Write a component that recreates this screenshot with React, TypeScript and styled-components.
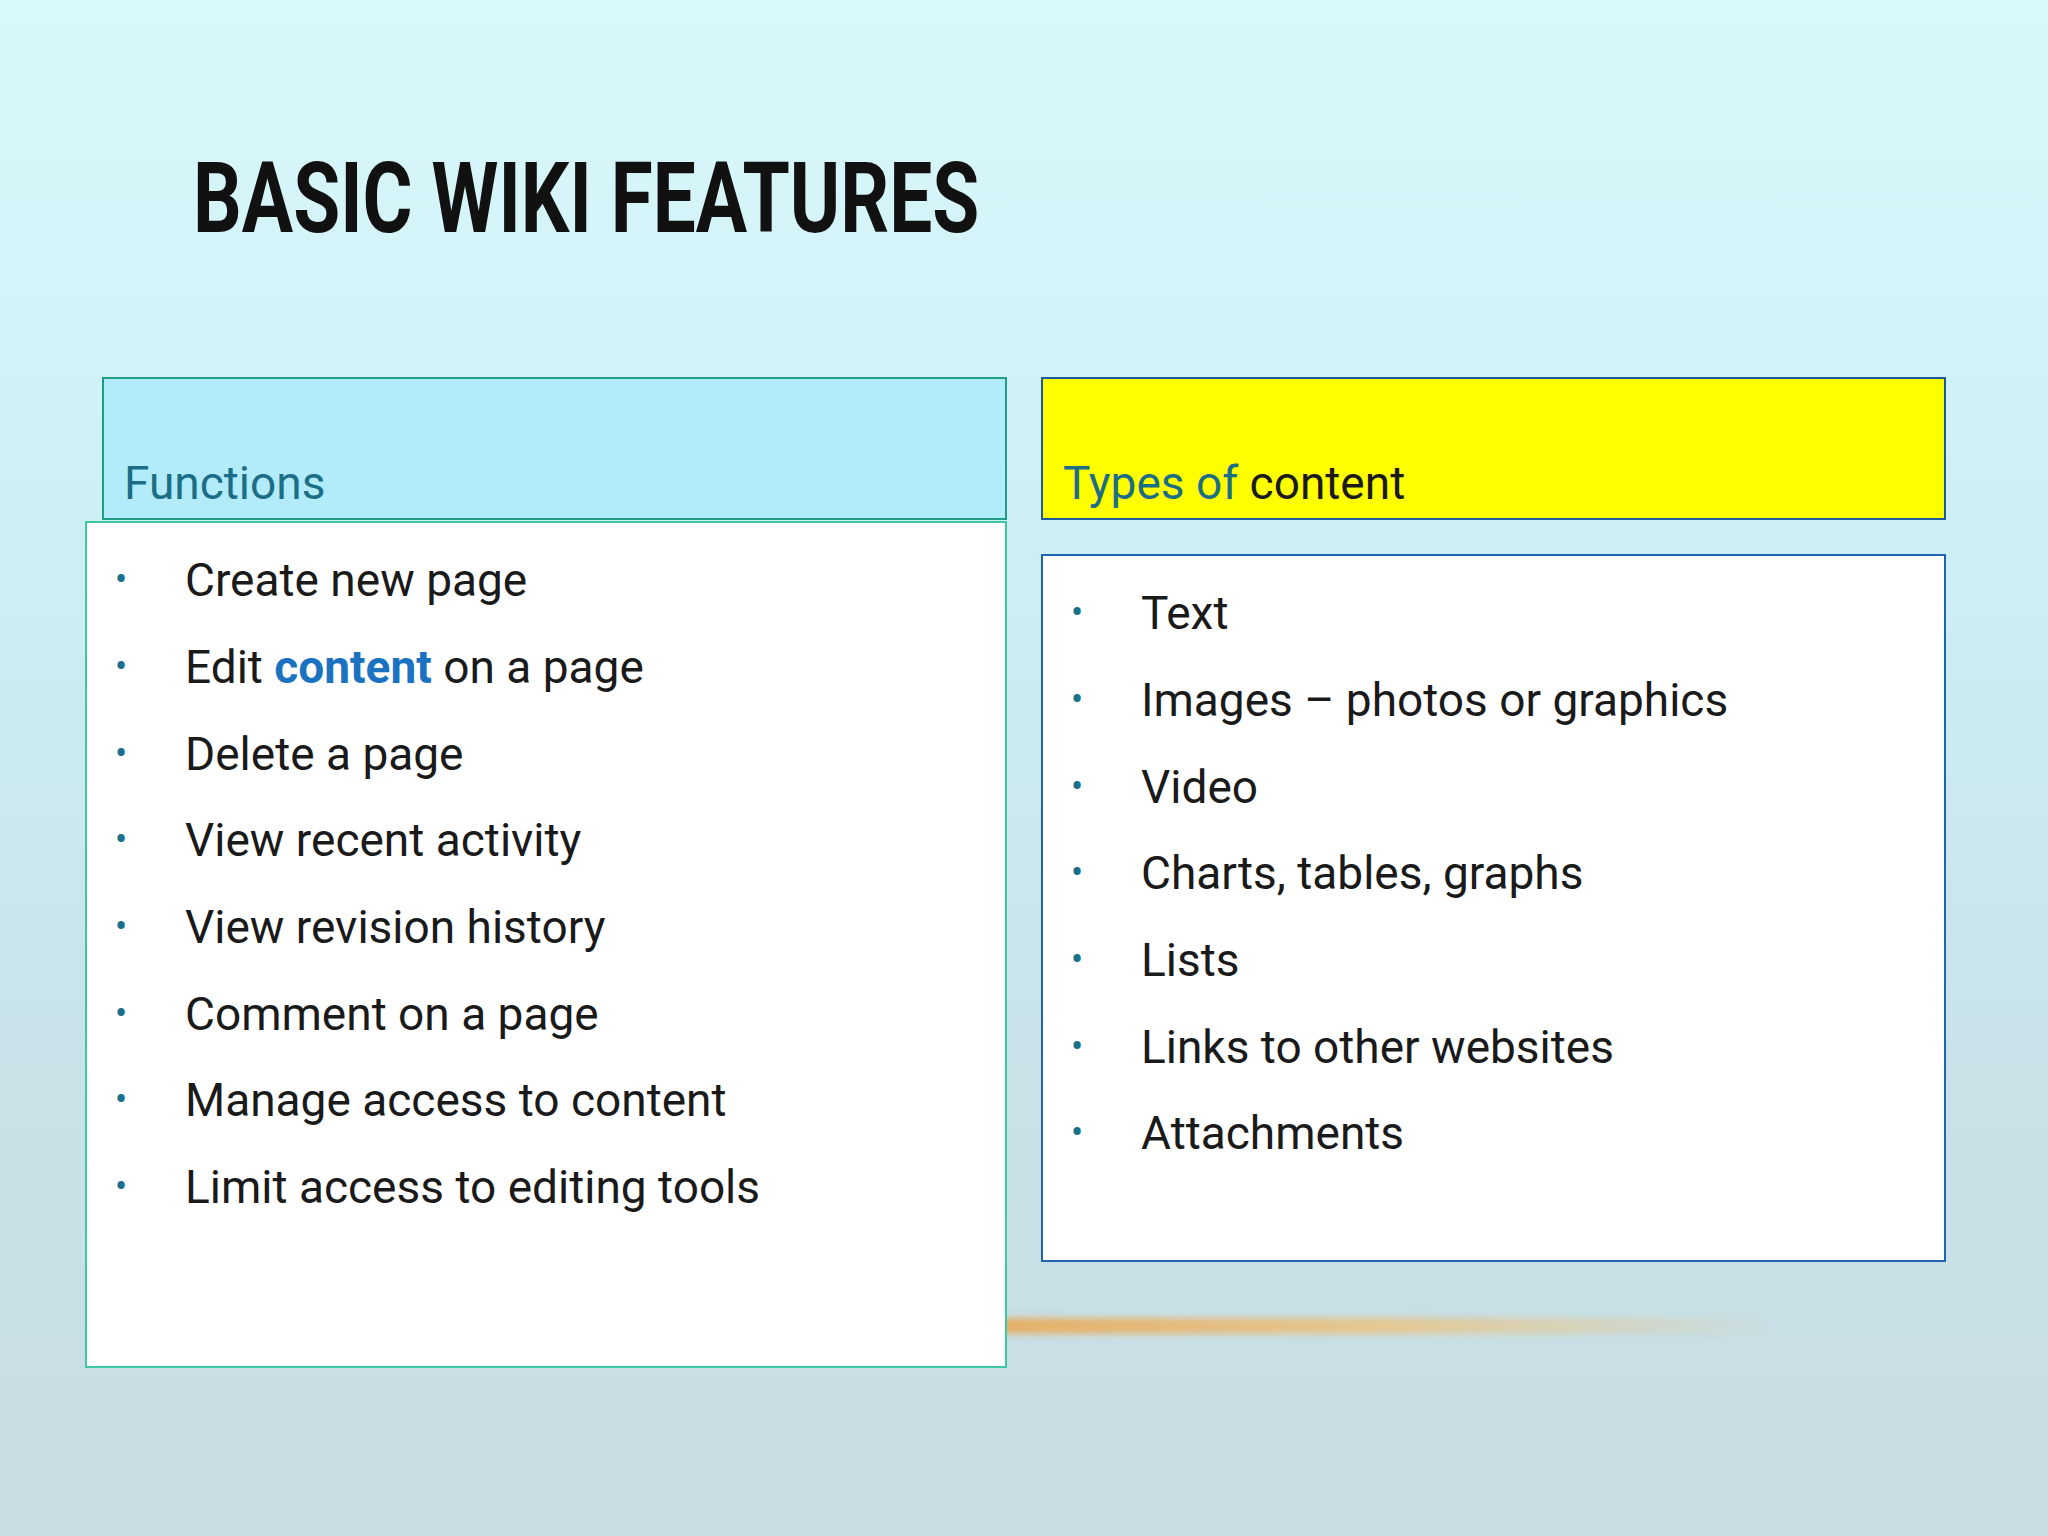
import React from 'react'
import styled, { createGlobalStyle } from 'styled-components'

const GlobalStyle = createGlobalStyle`
  html, body { margin: 0; padding: 0; }
  body { font-family: "Liberation Sans Narrow", "Roboto", "Liberation Sans", sans-serif; }
`

const functions = [
  'Create new page',
  'Edit|content|on a page',
  'Delete a page',
  'View recent activity',
  'View revision history',
  'Comment on a page',
  'Manage access to content',
  'Limit access to editing tools',
]

const contentTypes = [
  'Text',
  'Images – photos or graphics',
  'Video',
  'Charts, tables, graphs',
  'Lists',
  'Links to other websites',
  'Attachments',
]

const renderItem = (text: string) => {
  const parts = text.split('|')
  if (parts.length === 1) return text
  return (
    <>
      {parts[0]} <Highlight>{parts[1]}</Highlight> {parts[2]}
    </>
  )
}

const App: React.FC = () => {
  return (
    <Slide>
      <GlobalStyle />
      <Title>BASIC WIKI FEATURES</Title>
      <Columns>
        <Column>
          <Header $bg="#b2ecfa" $border="#1f9c84" $offset={17} $height={143}>
            <HeaderText>Functions</HeaderText>
          </Header>
          <ListBox $border="#3cc8a2" $height={847} $top={1} $pad={14}>
            {functions.map(f => (
              <Item key={f}>
                <Bullet>•</Bullet>
                <span>{renderItem(f)}</span>
              </Item>
            ))}
          </ListBox>
        </Column>
        <Column>
          <Header $bg="#ffff00" $border="#1c5a9c" $offset={0} $height={143}>
            <HeaderText>
              Types of <Dark>content</Dark>
            </HeaderText>
          </Header>
          <ListBox $border="#1f64b0" $height={708} $top={34} $pad={14}>
            {contentTypes.map(c => (
              <Item key={c}>
                <Bullet>•</Bullet>
                <span>{c}</span>
              </Item>
            ))}
          </ListBox>
        </Column>
      </Columns>
      <Streak />
    </Slide>
  )
}

const Slide = styled.div`
  position: relative;
  width: 2048px;
  height: 1536px;
  box-sizing: border-box;
  padding: 150px 102px 0 85px;
  background: linear-gradient(180deg, #d9f8fc 0%, #cdeff3 35%, #c8e2e8 70%, #c8dce2 100%);
  overflow: hidden;
`

const Title = styled.h1`
  margin: 0 0 0 108px;
  font-family: "Roboto", "Liberation Sans", sans-serif;
  font-weight: 700;
  font-size: 98px;
  line-height: 1;
  color: #111;
  transform: scaleX(0.78);
  transform-origin: left;
  white-space: nowrap;
`

const Columns = styled.div`
  display: grid;
  grid-template-columns: 922px 905px;
  gap: 34px;
  margin-top: 129px;
  position: relative;
  z-index: 1;
`

const Column = styled.div`
  display: flex;
  flex-direction: column;
`

const Header = styled.div<{ $bg: string; $border: string; $offset: number; $height: number }>`
  margin-left: ${p => p.$offset}px;
  height: ${p => p.$height}px;
  box-sizing: border-box;
  background: ${p => p.$bg};
  border: 2px solid ${p => p.$border};
  display: flex;
  align-items: flex-end;
  padding: 0 0 8px 20px;
`

const HeaderText = styled.div`
  font-size: 46px;
  color: #1c6e86;
`

const Dark = styled.span`
  color: #1a1a1a;
`

const ListBox = styled.div<{ $border: string; $height: number; $top: number; $pad: number }>`
  margin-top: ${p => p.$top}px;
  height: ${p => p.$height}px;
  box-sizing: border-box;
  background: #ffffff;
  border: 2px solid ${p => p.$border};
  padding-top: ${p => p.$pad}px;
`

const Item = styled.div`
  display: flex;
  align-items: center;
  height: 86.7px;
  font-size: 46px;
  color: #1a1a1a;
`

const Bullet = styled.span`
  width: 98px;
  padding-left: 28px;
  box-sizing: border-box;
  color: #1a6f8a;
  font-size: 36px;
`

const Highlight = styled.b`
  color: #1a72c0;
`

const Streak = styled.div`
  position: absolute;
  left: 993px;
  top: 1318px;
  width: 780px;
  height: 16px;
  border-radius: 8px;
  background: linear-gradient(90deg, rgba(232, 170, 90, 0.9) 0%, rgba(240, 190, 110, 0.7) 50%, rgba(240, 200, 140, 0) 100%);
  filter: blur(3px);
`

export default App
